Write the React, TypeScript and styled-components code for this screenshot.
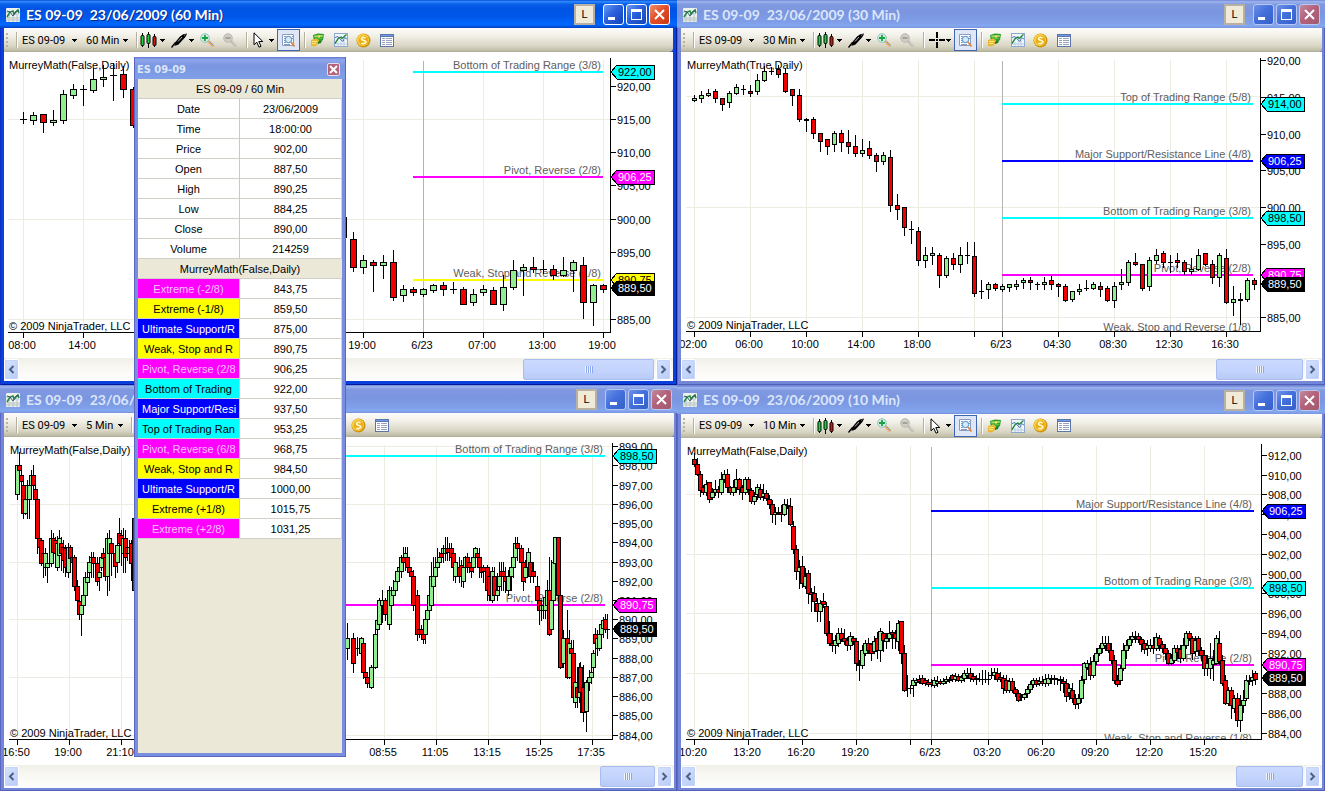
import React from 'react';
import styled, { createGlobalStyle, css } from 'styled-components';

const Global = createGlobalStyle`
  * { box-sizing: border-box; }
  html, body, #root { height: 100%; margin: 0; }
  body { overflow: hidden; background: #6f86d6; font: 11px/13px "Liberation Sans", Arial, sans-serif; color: #000; }
  button, select { font: inherit; color: inherit; margin: 0; padding: 0; border: 0; background: none; }
`;

/* ---------- desktop and window frames ---------- */

const Desktop = styled.div`
  position: relative;
  display: grid;
  grid-template-columns: minmax(0, 677fr) minmax(0, 648fr);
  height: 100vh;
  min-height: 700px;
`;

const Column = styled.div<{ $gap: number }>`
  display: grid;
  grid-template-rows: minmax(0, 385fr) minmax(0, 406fr);
  min-height: 0;
  row-gap: ${p => p.$gap}px;
`;

const Frame = styled.section<{ $active?: boolean; $edge: number }>`
  display: flex;
  flex-direction: column;
  min-width: 0;
  min-height: 0;
  padding: 0 ${p => (p.$active ? 4 : 3)}px ${p => p.$edge}px 4px;
  background: ${p => (p.$active ? '#0a3fdc' : '#7386d8')};
  box-shadow: inset 1px 0 ${p => (p.$active ? '#0831c8' : '#5a68c4')}, inset -1px -1px ${p => (p.$active ? '#001c9c' : '#5360b8')};
`;

const TitleBar = styled.header<{ $active?: boolean }>`
  display: flex;
  align-items: center;
  height: 28px;
  flex: none;
  margin: 0 ${p => (p.$active ? -4 : -3)}px 0 -4px;
  padding: 1px ${p => (p.$active ? 7 : 5)}px 0 6px;
  color: ${p => (p.$active ? '#fff' : '#dbe6fa')};
  background: ${p =>
    p.$active
      ? 'linear-gradient(#0a4ed6 0, #2f8bff 6%, #0a60ea 14%, #0054e3 30%, #0058ea 60%, #0068ff 88%, #0050d8 96%, #003cc0 100%)'
      : 'linear-gradient(#6f84d4 0, #9db4ee 6%, #8099e0 16%, #7b95e0 45%, #7f9fe8 80%, #84a8f0 92%, #7a93de 100%)'};
`;

const Title = styled.h2<{ $active?: boolean }>`
  flex: 1;
  margin: 0 0 0 6px;
  overflow: hidden;
  white-space: pre;
  font: bold 14px/20px Lato, "Open Sans", sans-serif;
  text-shadow: ${p => (p.$active ? '1px 1px #0a2a8c' : 'none')};
`;

const LinkButton = styled.button`
  width: 21px;
  height: 21px;
  margin-right: 6px;
  border: 2px solid #b9b0a4;
  background: #f0ead8;
  color: #000;
`;

const CaptionButton = styled.button<{ $active?: boolean; $close?: boolean }>`
  display: grid;
  place-items: center;
  width: 21px;
  height: 21px;
  margin-left: 2px;
  border: 1px solid ${p => (p.$active ? '#fff' : '#b9c8f2')};
  border-radius: 3px;
  background: ${p =>
    p.$close
      ? p.$active
        ? 'linear-gradient(135deg, #f09070, #e2502a 45%, #c83a14)'
        : 'linear-gradient(135deg, #c08a9c, #b4627a 45%, #a05a70)'
      : p.$active
        ? 'linear-gradient(135deg, #6a9cf4, #2a60dc 45%, #1444b8)'
        : 'linear-gradient(135deg, #6f92e8, #4470dc 45%, #3560c8)'};
`;

/* ---------- toolbar ---------- */

const Toolbar = styled.div`
  display: flex;
  align-items: center;
  flex: none;
  height: 24px;
  padding-left: 2px;
  overflow: hidden;
  background: linear-gradient(#fdfcfa, #f1efe6 35%, #d8d5c4 75%, #bcb9a4 96%, #a8a590);
  border-radius: 0 0 4px 0;
`;

const Grip = styled.span`
  width: 2px;
  height: 15px;
  margin-right: 8px;
  background: repeating-linear-gradient(#b8b4a4 0 2px, transparent 2px 4px);
`;

const Separator = styled.span`
  flex: none;
  width: 2px;
  height: 16px;
  background: linear-gradient(90deg, #b4b1a0 50%, #fff 50%);
`;

const Picker = styled.label<{ $width: number }>`
  position: relative;
  display: flex;
  align-items: center;
  flex: none;
  width: ${p => p.$width}px;
  margin-left: 4px;
  select {
    width: 100%;
    padding-top: 1px;
    appearance: none;
    font: 11px/16px Roboto, "Liberation Sans", sans-serif;
    outline: none;
  }
  svg { position: absolute; right: 4px; pointer-events: none; }
`;

const Tool = styled.button<{ $width?: number; $pressed?: boolean }>`
  display: flex;
  align-items: center;
  justify-content: center;
  gap: 1px;
  flex: none;
  width: ${p => p.$width ?? 23}px;
  height: 22px;
  ${p => p.$pressed && css`
    background: #dfe7f6;
    border: 1px solid #3f66b4;
  `}
`;

const Space = styled.span<{ $width: number }>`
  flex: none;
  width: ${p => p.$width}px;
`;

/* ---------- chart and scroll bar ---------- */

const ChartPane = styled.div`
  flex: 1;
  min-height: 0;
  overflow: hidden;
  background: #fff;
  svg { display: block; width: 100%; height: 100%; }
`;

const ScrollBar = styled.div`
  display: flex;
  flex: none;
  height: 23px;
  padding: 1px 2px 1px 0;
  background: linear-gradient(#f0efe8, #f8f7f2 40%, #fefefd);
`;

const ScrollButton = styled.button`
  display: grid;
  place-items: center;
  width: 15px;
  border: 1px solid #fff;
  border-radius: 2px;
  background: linear-gradient(135deg, #d6e2fd, #b8cbf8);
  box-shadow: inset 0 0 0 1px #c4d3fa;
`;

const Track = styled.div`
  display: flex;
  justify-content: flex-end;
  flex: 1;
`;

const Thumb = styled.div<{ $width: number }>`
  display: flex;
  align-items: center;
  justify-content: center;
  width: ${p => p.$width}px;
  margin-right: 2px;
  border: 1px solid #a9bdf0;
  border-radius: 2px;
  background: linear-gradient(#cbd9fd, #c2d3fc 60%, #b8cbf6);
  &::after {
    content: '';
    width: 8px;
    height: 7px;
    background: repeating-linear-gradient(90deg, #eef4fe 0 1px, #8ca8ec 1px 2px);
  }
`;

/* ---------- data box ---------- */

const DataBox = styled.aside`
  position: absolute;
  top: 57px;
  bottom: 34px;
  left: 134px;
  width: 212px;
  display: flex;
  flex-direction: column;
  padding: 0 4px 4px;
  background: #7a8ee0;
  box-shadow: inset 0 0 0 1px #5a66c0;
`;

const DataTitle = styled.header`
  display: flex;
  align-items: center;
  justify-content: space-between;
  flex: none;
  height: 22px;
  margin: 0 -3px;
  padding: 3px 5px 0 2px;
  color: #dbe6fa;
  background: linear-gradient(#6478d0, #8ea6ea 12%, #7b95e0 40%, #80a0e8);
  font: bold 11px/16px "DejaVu Sans Condensed", "Open Sans", sans-serif;
`;

const DataClose = styled.button`
  display: grid;
  place-items: center;
  width: 13px;
  height: 13px;
  border: 1px solid #e6dcec;
  border-radius: 2px;
  background: #b4627a;
`;

const DataBody = styled.div`
  flex: 1;
  min-height: 0;
  overflow: hidden;
  background: #ebe8d8;
`;

const DataTable = styled.table`
  width: 100%;
  table-layout: fixed;
  border-collapse: separate;
  border-spacing: 0;
`;

const Heading = styled.th`
  height: 20px;
  padding: 2px 0 0;
  font-weight: normal;
  background: #ebe8d8;
  border-bottom: 1px solid #d0cfc8;
`;

const Name = styled.th<{ $bg?: string; $fg?: string }>`
  height: 20px;
  padding: 2px 4px 0;
  overflow: hidden;
  white-space: nowrap;
  font-weight: normal;
  color: ${p => p.$fg ?? '#000'};
  background: ${p => p.$bg ?? '#fff'};
  border-right: 1px solid #c8c8c8;
  border-bottom: 1px solid #d0cfc8;
`;

const Value = styled.td`
  height: 20px;
  padding: 2px 0 0;
  text-align: center;
  background: #fff;
  border-right: 1px solid #d8d6cc;
  border-bottom: 1px solid #d0cfc8;
`;

/* ---------- icons ---------- */

const Caret = () => (
  <svg width="5" height="3" viewBox="0 0 5 3" shapeRendering="crispEdges"><path d="M0 0h5v1H0zM1 1h3v1H1zM2 2h1v1H2z" /></svg>
);

const WindowIcon = () => (
  <svg width="14" height="14" viewBox="0 0 14 14">
    <rect width="14" height="14" rx="1" fill="#eef2ee" />
    <path d="M0 10h14M0 12h14M3 7v7M7 7v7M11 7v7" stroke="#b8c4c4" />
    <path d="M0 4h4M8 6h5M1 7h3" stroke="#a8b8d8" />
    <path d="M1 9l3-5 3-1 1 3 4-4 1 3" fill="none" stroke="#1f8a3c" strokeWidth="1.500" />
    <path d="M1 3l3 1 3 4 3-5 3 0" fill="none" stroke="#345a6c" />
  </svg>
);

const CandlesIcon = () => (
  <svg width="17" height="16" viewBox="0 0 17 16">
    <path d="M2.500 1v14M8.500 0v16M14.500 2v13" stroke="#000" />
    <rect x="1" y="3.500" width="3" height="10" rx="1" fill="#22d040" stroke="#000" />
    <rect x="7" y="2.500" width="3" height="9" rx="1" fill="#22d040" stroke="#000" />
    <rect x="13" y="4.500" width="3" height="9" rx="1" fill="#c81c1c" stroke="#000" />
  </svg>
);

const PenIcon = () => (
  <svg width="17" height="15" viewBox="0 0 17 15">
    <path d="M0.500 14.500L4.500 9.500" stroke="#000" strokeWidth="1.300" />
    <path d="M4 9.500L9 3.500Q12 0.500 16 0.500Q15.500 3 13.500 5L7.500 11.500L3.500 13z" />
    <path d="M7 8.500l4-4.500" stroke="#c8ccd0" strokeWidth="0.900" />
    <path d="M13 2.500l1.500-1" stroke="#7a7e84" />
  </svg>
);

const ZoomIcon = ({ out }: { out?: boolean }) => (
  <svg width="15" height="15" viewBox="0 0 15 15">
    <path d="M8.500 8.500l4 4" stroke={out ? '#c0beb6' : '#e8b070'} strokeWidth="3" strokeLinecap="round" />
    <path d="M9.500 8.500l4 4" stroke={out ? '#dcdad2' : '#7a94c8'} />
    <circle cx="5" cy="5" r="4.300" fill={out ? '#cfcdc6' : '#d4f0e0'} stroke={out ? '#bab8b0' : '#8cc0c4'} />
    {out ? <path d="M2.500 5h5" stroke="#a4a29a" strokeWidth="2" /> : <path d="M2 5h6M5 2v6" stroke="#1ca044" strokeWidth="1.800" />}
  </svg>
);

const PointerIcon = () => (
  <svg width="11" height="16" viewBox="0 0 11 16">
    <path d="M1 0.800v12l2.800-2.600 2.200 5 2-0.900-2.200-4.800h4z" fill="#fff" stroke="#000" />
  </svg>
);

const CrossIcon = () => (
  <svg width="16" height="16" viewBox="0 0 16 16" shapeRendering="crispEdges">
    <path d="M7 0h2v6H7zM7 10h2v6H7zM0 7h6v2H0zM10 7h6v2h-6zM7 7h2v2H7z" />
  </svg>
);

const DataBoxIcon = () => (
  <svg width="15" height="15" viewBox="0 0 15 15">
    <path d="M1.500 1.500h11v11h-11z" fill="#fff" stroke="#8a9cc0" />
    <path d="M3 3.500h2M3 5.500h1M3 7.500h1M3 9.500h2M3 11.500h6M11 3.500h1M11 5.500h1" stroke="#8098c8" />
    <path d="M10 9l3.500 4.500" stroke="#e08a48" strokeWidth="2" />
    <circle cx="7.500" cy="6.500" r="3.200" fill="#d4ecfa" stroke="#4c88c0" />
  </svg>
);

const OrderIcon = () => (
  <svg width="15" height="14" viewBox="0 0 15 14">
    <path d="M3 2l5-1.500L14 1l-1 6-3 2H4z" fill="#2f9a30" />
    <path d="M4 2.500l9-0.500-0.500 2-8 0.500z" fill="#9ce05c" />
    <path d="M5 6l7-0.500" stroke="#68c848" />
    <path d="M1 7l5-1.500 3 1.500-1 4-3 2.500-4-0.500z" fill="#e8b830" />
    <path d="M2 8.500h5M2 10.500h4" stroke="#fbe88c" />
    <path d="M8 9l4-1.500-1 2.500-3 1z" fill="#1e7c24" />
    <circle cx="9" cy="3.500" r="1.200" fill="#f6e060" />
  </svg>
);

const IndicatorIcon = () => (
  <svg width="14" height="14" viewBox="0 0 14 14">
    <rect x="0.500" y="0.500" width="13" height="13" fill="#f2f7fc" stroke="#8ca8cc" />
    <path d="M4 9v4M7 8v5M10 7v6M1 11h12" stroke="#b8cce4" />
    <path d="M1 10.500L4.500 5l2.500-1 1 1.500L12.500 1.500" fill="none" stroke="#23873a" strokeWidth="1.400" />
    <path d="M1 4.500l3-1 3 3.500 2 1.500 1.500-4 2.500 1.500" fill="none" stroke="#4a78b0" />
  </svg>
);

const CoinIcon = () => (
  <svg width="15" height="15" viewBox="0 0 15 15">
    <circle cx="7.500" cy="7.500" r="7" fill="#d0940c" />
    <circle cx="7" cy="7" r="6" fill="#fbd84c" />
    <circle cx="7.500" cy="7.500" r="5" fill="#ecae18" />
    <path d="M9.500 5Q7 3.500 5.800 5T8 7.500T9 10T5.300 10" fill="none" stroke="#fff8d0" strokeWidth="1.600" />
  </svg>
);

const ListIcon = () => (
  <svg width="14" height="13" viewBox="0 0 14 13" shapeRendering="crispEdges">
    <path d="M0 0h14v13H0z" fill="#5c74a8" />
    <path d="M1 3h12v9H1z" fill="#fff" />
    <path d="M1 1h12v1H1z" fill="#6c9cf0" />
    <path d="M2 4h3v1H2zM6 4h6v1H6zM2 6h3v1H2zM6 6h6v1H6zM2 8h3v1H2zM6 8h6v1H6zM2 10h3v1H2zM6 10h6v1H6z" fill="#98a2b8" />
  </svg>
);

const Chevron = ({ right }: { right?: boolean }) => (
  <svg width="7" height="9" viewBox="0 0 7 9">
    <path d={right ? 'M1.500 1L5 4.500 1.500 8' : 'M5.500 1L2 4.500 5.500 8'} fill="none" stroke="#4d6185" strokeWidth="2" />
  </svg>
);

/* ---------- chart data ---------- */

type Candle = { x: number; high: number; top: number; bottom: number; low: number; up: boolean };
type Level = { y: number; color: string; text: string };
type Tag = { y: number; color: string; text: string; fg: string };
type ChartSpec = {
  id: string;
  left: number;
  top: number;
  study: string;
  plotLeft: number;
  axisX: number;
  axisTop: number;
  axisY: number;
  body: number;
  gridX: number[];
  gridY: number[];
  session?: number;
  times: [number, string][];
  prices: [number, string][];
  levelStart: number;
  levels: Level[];
  tags: Tag[];
  candles: Candle[];
};

// "g" is a rising bar, "r" a falling one: high, body top, body bottom, low.
const bars = (first: number, step: number, data: string): Candle[] =>
  data.trim().split(/\s+/).map((item, i) => {
    const at = item.indexOf('@');
    const x = at > 0 ? Number(item.slice(0, at)) : first + i * step;
    const bar = item.slice(at + 1);
    const [high, top, bottom, low] = bar.slice(1).split(',').map(Number);
    return { x, high, top, bottom, low, up: bar[0] === 'g' };
  });

const CYAN = '#00ffff';
const MAGENTA = '#ff00ff';
const BLUE = '#0000ff';
const YELLOW = '#ffff00';

const tag = (y: number, text: string, color: string): Tag => ({
  y, text, color, fg: color === CYAN || color === YELLOW ? '#000' : '#fff',
});

const hour60: ChartSpec = {
  id: 'm60', left: 4, top: 52, study: 'MurreyMath(False,Daily)',
  plotLeft: 8, axisX: 610, axisTop: 58, axisY: 332, body: 7,
  gridX: [23, 83, 363, 483, 543, 603], gridY: [119, 219, 319], session: 423,
  times: [[23, '08:00'], [83, '14:00'], [363, '19:00'], [423, '6/23'], [483, '07:00'], [543, '13:00'], [603, '19:00']],
  prices: [[86, '920,00'], [119, '915,00'], [152, '910,00'], [185, '905,00'], [219, '900,00'], [252, '895,00'], [319, '885,00']],
  levelStart: 413,
  levels: [
    { y: 72, color: CYAN, text: 'Bottom of Trading Range (3/8)' },
    { y: 177, color: MAGENTA, text: 'Pivot, Reverse (2/8)' },
    { y: 280, color: YELLOW, text: 'Weak, Stop and Reverse (1/8)' },
  ],
  tags: [tag(72, '922,00', CYAN), tag(177, '906,25', MAGENTA), tag(280, '890,75', YELLOW), tag(288, '889,50', '#000')],
  candles: [
    ...bars(23, 10, `g112,119,119,123 g112,115,120,124 r114,114,122,132 g110,120,122,125 g90,94,120,123 g84,89,95,98
      g85,89,89,105 g68,79,90,92 g65,77,79,86 g63,75,75,100 r66,74,89,97 r87,89,125,127`),
    ...bars(343, 10, `r210,217,237,240 r232,239,267,271 g255,260,267,273 r260,262,265,291 g255,262,265,278 r250,262,297,300
      g285,289,295,301 r287,289,292,295 g288,289,294,296 g284,285,290,292 r282,285,289,295 g282,289,289,293 r287,289,304,304
      g289,294,302,305 g285,289,292,295 r287,290,304,304 g275,287,304,310 g260,270,287,289 g264,267,270,295 r257,267,269,272
      g260,269,269,273 r265,269,275,279 g257,270,275,276 g260,262,270,291 r257,265,302,318 g284,285,302,325 r284,285,289,292`),
  ],
};

const min30: ChartSpec = {
  id: 'm30', left: 681, top: 52, study: 'MurreyMath(True,Daily)',
  plotLeft: 686, axisX: 1260, axisTop: 58, axisY: 331, body: 5,
  gridX: [694, 750, 806, 862, 918, 974, 1058, 1114, 1170, 1226], gridY: [96, 207, 317], session: 1002,
  times: [[694, '02:00'], [750, '06:00'], [806, '10:00'], [862, '14:00'], [918, '18:00'], [974, ''], [1002, '6/23'],
    [1058, '04:30'], [1114, '08:30'], [1170, '12:30'], [1226, '16:30']],
  prices: [[60, '920,00'], [97, '915,00'], [134, '910,00'], [170, '905,00'], [207, '900,00'], [244, '895,00'], [317, '885,00']],
  levelStart: 1002,
  levels: [
    { y: 104, color: CYAN, text: 'Top of Trading Range (5/8)' },
    { y: 161, color: BLUE, text: 'Major Support/Resistance Line (4/8)' },
    { y: 218, color: CYAN, text: 'Bottom of Trading Range (3/8)' },
    { y: 275, color: MAGENTA, text: 'Pivot, Reverse (2/8)' },
    { y: 334, color: YELLOW, text: 'Weak, Stop and Reverse (1/8)' },
  ],
  tags: [tag(104, '914,00', CYAN), tag(161, '906,25', BLUE), tag(218, '898,50', CYAN), tag(275, '890,75', MAGENTA), tag(284, '889,50', '#000')],
  candles: bars(694, 7, `g95,98,100,101 g91,95,98,102 g89,93,95,96 r89,91,98,102 r98,98,104,110 g91,93,102,107 g84,87,93,94
    g85,89,89,94 r85,91,93,96 g74,80,91,94 g66,71,80,81 g67,71,71,74 r65,69,74,77 r68,73,91,92 r89,89,95,105 r89,95,119,121
    g118,119,120,131 r117,119,133,138 r133,133,141,151 r139,139,146,154 g131,133,144,151 r130,133,142,151 r130,142,146,153
    r135,146,153,156 g139,150,153,156 r141,148,155,158 r153,155,161,171 g152,155,161,164 r150,157,205,211 r194,205,209,219
    r207,207,227,235 g221,229,229,243 r227,231,260,265 g247,255,260,267 g247,253,255,264 r253,255,275,287 g256,258,275,277
    r253,258,264,269 g247,255,264,272 g242,255,255,263 r242,256,293,296 g280,291,291,298 g282,284,289,298 r283,284,288,290
    g284,286,289,291 g284,284,287,291 g280,284,286,289 g278,280,282,288 r277,280,282,289 g282,284,284,289 g277,282,284,289
    r276,280,284,289 r283,284,286,296 r284,286,300,301 g291,291,299,301 g284,289,291,294 g280,288,288,290 g282,284,288,289
    r282,286,289,296 r286,288,300,301 g282,286,300,307 g269,282,284,289 g260,262,282,285 r253,262,264,265 r264,264,288,290
    g257,260,286,290 g249,255,260,263 r251,253,262,267 g255,262,262,272 r253,260,262,267 r260,262,271,274 g258,269,271,274
    g249,255,269,270 r253,253,264,265 r260,264,277,283 g253,255,277,286 r249,258,302,303 g286,299,302,315 g293,299,300,324
    g278,280,299,301 r278,280,284,289`),
};

const min5: ChartSpec = {
  id: 'm5', left: 4, top: 437, study: 'MurreyMath(False,Daily)',
  plotLeft: 9, axisX: 612, axisTop: 443, axisY: 739, body: 5,
  gridX: [17, 69, 121, 384, 436, 488, 540, 592], gridY: [446, 504, 562, 619, 677, 735],
  times: [[17, '16:50'], [69, '19:00'], [121, '21:10'], [384, '08:55'], [436, '11:05'], [488, '13:15'], [540, '15:25'], [592, '17:35']],
  prices: [[446, '899,00'], [465, '898,00'], [485, '897,00'], [504, '896,00'], [523, '895,00'], [542, '894,00'], [562, '893,00'],
    [581, '892,00'], [600, '891,00'], [619, '890,00'], [638, '889,00'], [658, '888,00'], [677, '887,00'], [696, '886,00'],
    [715, '885,00'], [735, '884,00']],
  levelStart: 240,
  levels: [
    { y: 456, color: CYAN, text: 'Bottom of Trading Range (3/8)' },
    { y: 605, color: MAGENTA, text: 'Pivot, Reverse (2/8)' },
  ],
  tags: [tag(456, '898,50', CYAN), tag(605, '890,75', MAGENTA), tag(629, '889,50', '#000')],
  candles: bars(0, 0, `17@g465,465,494,499 19@r452,465,470,477 21@r470,475,481,490 23@r481,485,513,518 25@g485,499,513,514
    27@g480,485,499,518 29@g475,485,499,518 31@g470,475,485,490 33@r465,475,485,497 35@r485,489,499,505 37@r495,499,538,553
    39@r530,538,547,555 41@r538,540,563,565 43@r550,553,563,577 45@g548,553,567,575 47@g555,563,567,582 51@g530,538,563,566
    53@r533,538,552,560 55@r537,540,553,562 57@g536,543,567,570 59@g530,538,555,560 61@r537,543,553,570 63@r540,547,560,572
    65@r545,548,567,576 68@g543,547,572,577 70@r545,547,558,562 72@r550,557,562,572 74@r555,557,586,590 77@r580,586,600,605
    79@r598,601,614,619 81@g600,605,614,635 83@g590,595,605,608 85@g572,577,595,600 87@g566,577,582,585 89@g556,562,572,576
    91@g552,557,562,577 93@r552,557,563,577 97@r557,563,581,585 99@g565,572,577,590 101@g553,557,567,570 103@r548,553,558,560
    105@r552,557,576,580 107@g533,538,576,595 109@g530,538,553,590 111@r540,543,553,575 115@r548,553,566,577
    117@g540,545,562,572 119@r518,533,543,560 121@r530,535,545,565 123@g528,538,553,572 125@r530,538,557,572
    127@r540,547,553,560 129@g540,547,553,562 131@r540,543,563,580 134@r500,518,590,592
    347@g623,638,648,659 353@r633,638,663,672 357@g637,648,648,655 361@g637,638,653,655 363@r640,643,672,678
    365@r670,672,677,680 367@r675,677,683,687 371@g665,667,687,688 375@g625,634,667,668 377@g617,620,629,635
    379@g598,600,624,628 382@g590,600,605,622 385@r598,600,614,620 389@g586,590,624,629 391@g587,590,605,615
    393@g580,590,595,600 395@g572,581,590,595 397@g568,571,581,590 399@g560,567,571,577 401@g555,557,571,577
    403@r547,557,562,566 405@g547,553,557,570 407@r547,557,567,570 409@r560,567,572,575 411@r567,571,576,590
    413@r570,576,605,610 417@r590,595,634,640 419@r622,629,634,637 421@r625,629,634,637 423@r630,634,639,643
    425@g615,619,634,643 427@g606,610,619,625 429@g590,595,610,615 431@g562,576,605,610 433@g557,576,586,595
    435@g557,567,576,586 437@g548,562,567,572 439@g552,557,562,566 441@r548,553,557,562 443@g545,548,553,562
    445@g537,548,553,560 447@r537,548,552,560 449@r543,548,552,560 451@r543,548,557,566 453@r550,553,567,580
    455@g553,562,576,582 459@r557,567,576,582 461@r560,565,576,586 463@g560,567,581,587 465@g556,557,567,577
    467@r553,557,567,572 469@r557,562,567,572 471@r557,567,571,577 473@g550,557,567,572 475@g547,548,557,562
    477@r548,553,557,567 479@r548,557,567,577 481@r560,567,572,577 483@r565,567,571,582 487@r565,567,590,600
    489@r572,576,595,600 492@g567,571,600,602 494@r567,576,595,600 497@g573,590,595,600 499@g562,576,586,595
    501@r562,571,576,590 503@r562,571,576,590 505@r567,576,581,592 508@g570,576,590,595 511@g560,567,576,590
    513@g550,557,567,577 515@g537,543,557,562 517@r537,543,548,560 521@r545,548,562,567 523@r555,562,581,590
    525@g560,567,577,582 528@g548,552,567,572 530@r552,562,576,582 533@r562,571,576,582 537@r576,586,600,610
    539@r595,600,610,624 541@g600,605,610,620 543@g600,605,610,618 545@g590,597,610,618 547@g580,590,605,634
    549@r557,590,634,635 551@g560,600,629,632 553@g557,562,600,605 555@g537,537,563,600 558@r537,537,595,625
    560@r595,595,667,668 563@g630,638,663,667 567@r610,638,677,678 569@g630,643,677,678 571@r640,648,653,667
    573@r640,653,697,698 575@g675,682,702,707 577@r680,687,697,707 579@g663,667,697,702 580@r662,667,692,712
    583@r665,687,712,721 586@g680,682,711,731 589@g670,677,682,690 591@g667,672,677,683 593@g650,653,667,677
    595@r628,634,643,655 597@g630,638,648,655 599@g625,634,648,650 601@g620,624,634,648 603@g617,620,628,637
    605@r614,619,629,632 607@g614,629,629,638`),
};

const min10: ChartSpec = {
  id: 'm10', left: 681, top: 438, study: 'MurreyMath(False,Daily)',
  plotLeft: 686, axisX: 1261, axisTop: 444, axisY: 739, body: 5,
  gridX: [694, 748, 802, 856, 910, 988, 1042, 1096, 1150, 1204], gridY: [494, 554, 613, 673, 733], session: 931,
  times: [[694, '10:20'], [748, '13:20'], [802, '16:20'], [856, '19:20'], [910, ''], [931, '6/23'], [988, '03:20'],
    [1042, '06:20'], [1096, '09:20'], [1150, '12:20'], [1204, '15:20']],
  prices: [[455, '912,00'], [475, '910,00'], [494, '908,00'], [514, '906,00'], [534, '904,00'], [554, '902,00'], [574, '900,00'],
    [593, '898,00'], [613, '896,00'], [633, '894,00'], [653, '892,00'], [693, '888,00'], [713, '886,00'], [733, '884,00']],
  levelStart: 931,
  levels: [
    { y: 511, color: BLUE, text: 'Major Support/Resistance Line (4/8)' },
    { y: 588, color: CYAN, text: 'Bottom of Trading Range (3/8)' },
    { y: 665, color: MAGENTA, text: 'Pivot, Reverse (2/8)' },
    { y: 745, color: YELLOW, text: 'Weak, Stop and Reverse (1/8)' },
  ],
  tags: [tag(511, '906,25', BLUE), tag(588, '898,50', CYAN), tag(665, '890,75', MAGENTA), tag(678, '889,50', '#000')],
  candles: bars(694, 3, `r453,459,464,466 r458,464,474,475 r471,474,490,496 r485,487,492,494 g480,484,492,495 r482,482,499,502
    g488,492,497,499 g480,489,492,495 r486,489,492,497 g472,479,492,494 g470,474,479,482 r469,474,487,492 r486,487,492,494
    g480,487,492,495 g469,479,487,492 r478,479,489,494 r485,487,492,499 g477,479,492,494 r477,479,489,494 r488,490,501,503
    g492,496,501,504 g484,487,494,499 r484,489,497,499 g484,493,496,500 r490,493,498,500 r495,499,504,508 r500,504,514,522
    g507,512,514,524 g507,513,513,514 r505,512,514,521 g499,504,514,515 g499,505,505,508 r498,506,524,525 r521,526,549,553
    r545,549,571,579 g560,567,571,588 r556,566,583,587 g568,576,586,588 r570,573,593,603 r588,592,594,611 r586,593,601,611
    r598,603,611,621 g600,603,611,621 r593,601,604,607 r602,606,633,635 r621,633,643,645 r633,643,645,651 g635,640,645,653
    g628,633,643,646 r628,633,639,641 r629,638,641,644 r637,640,645,650 g632,636,645,649 r636,638,641,644 r638,641,663,670
    r660,664,665,680 g645,650,665,668 g640,643,653,655 r638,643,650,653 r643,644,653,660 g636,641,651,653 r632,638,650,658
    g628,631,650,661 r632,633,640,651 g633,638,641,648 g621,633,638,641 r630,632,634,648 r630,633,638,648 g620,623,641,650
    r621,621,653,663 r645,653,690,691 g675,688,688,696 g685,688,688,693 g678,680,685,696 g678,680,682,685 r675,679,681,683
    r675,678,683,684 r678,680,683,685 r679,682,684,686 r679,682,684,686 g677,680,685,687 g676,681,683,686 r679,681,683,684
    g678,681,683,684 g676,679,681,683 g677,679,680,682 r674,675,679,681 g673,676,679,681 r674,676,680,681 g675,677,680,682
    g670,673,678,681 g668,673,675,678 r668,673,678,681 r673,676,679,681 r675,678,679,684 g673,679,679,681 g670,679,679,684
    g670,679,679,682 g672,679,679,684 g668,675,675,678 g668,672,675,679 r668,673,679,681 r672,677,679,681 r675,678,688,693
    r675,680,690,692 g678,681,690,692 r678,681,690,692 r687,689,693,696 r690,693,700,701 g694,696,697,700 g693,694,697,699
    g686,689,693,697 g681,684,689,692 g678,680,684,687 r678,680,684,686 g677,681,683,685 r676,681,683,685 g674,679,683,686
    g674,678,683,685 g675,678,679,683 g675,678,678,684 g678,679,679,684 g676,679,680,690 r677,681,683,692 r679,683,696,701
    g684,688,692,699 r683,690,698,702 r694,698,704,708 g694,698,703,708 g676,680,698,702 g662,663,679,683 g660,663,667,669
    r657,664,675,679 g655,661,675,677 g648,653,661,664 g645,648,653,655 g636,643,648,652 g636,643,645,650 r636,643,650,652
    r643,650,660,663 r655,660,680,683 r675,680,684,686 g665,668,680,684 g643,650,668,670 g640,645,650,658 g636,639,645,648
    g632,636,639,642 g631,637,637,642 r633,636,639,642 r637,639,644,651 r640,643,649,653 g640,645,648,655 g639,645,648,651
    r637,645,648,653 g633,637,648,650 r635,638,645,650 r641,644,648,652 r644,648,653,659 r650,653,663,664 g654,658,663,664
    g645,648,660,662 r645,648,652,658 r645,649,658,662 g638,645,658,660 g631,633,645,648 r631,633,638,640 r636,638,653,659
    g636,640,651,655 r636,638,650,655 r647,650,655,660 r650,655,668,675 g655,663,668,675 g643,658,668,678 g650,660,664,680
    g635,638,663,664 r631,643,661,664 r655,660,683,685 r675,680,703,704 g687,690,703,705 r687,690,705,718 g695,698,708,712
    r693,698,720,726 g695,705,720,731 g690,700,705,712 g675,680,698,700 g675,680,681,684 g670,677,680,685 r671,673,679,684`),
};

/* ---------- chart ---------- */

const CandleMark = ({ c, width }: { c: Candle; width: number }) => {
  const left = c.x - (width - 1) / 2;
  const height = c.bottom - c.top + 1;
  return (
    <g>
      <rect x={c.x} y={c.high} width={1} height={c.low - c.high + 1} />
      <rect x={left} y={c.top} width={width} height={height} />
      {height > 2 && (
        <rect x={left + 1} y={c.top + 1} width={width - 2} height={height - 2} fill={c.up ? '#90ee90' : '#f00000'} />
      )}
    </g>
  );
};

const Chart = ({ spec: s }: { spec: ChartSpec }) => (
  <ChartPane>
    <svg role="img" aria-label={s.study} fontFamily='"Liberation Sans", Arial, sans-serif' fontSize="11">
      <clipPath id={s.id}>
        <rect x={s.plotLeft} y={s.axisTop} width={s.axisX - s.plotLeft} height={s.axisY - s.axisTop} />
      </clipPath>
      <g transform={`translate(${-s.left} ${-s.top})`} shapeRendering="crispEdges">
        <g fill="#eeece2">
          {s.gridX.map(x => <rect key={x} x={x} y={s.axisTop + 2} width={1} height={s.axisY - s.axisTop - 2} />)}
          {s.gridY.map(y => <rect key={y} x={s.plotLeft} y={y} width={s.axisX - s.plotLeft} height={1} />)}
        </g>
        {s.session && <rect x={s.session} y={s.axisTop + 3} width={1} height={s.axisY - s.axisTop - 3} fill="#b4b4b4" />}
        <g clipPath={`url(#${s.id})`}>
          {s.levels.map(l => (
            <g key={l.text}>
              <rect x={s.levelStart} y={l.y - 1} width={s.axisX - 7 - s.levelStart} height={2} fill={l.color} />
              <text x={s.axisX - 9} y={l.y - 3} textAnchor="end" fill="#606060">{l.text}</text>
            </g>
          ))}
        </g>
        <text x={s.plotLeft + 1} y={s.axisTop + 11}>{s.study}</text>
        <text x={s.plotLeft + 1} y={s.axisY - 2}>© 2009 NinjaTrader, LLC</text>
        {s.candles.map(c => <CandleMark key={c.x} c={c} width={s.body} />)}
        <rect x={s.axisX} y={s.axisTop} width={1} height={s.axisY - s.axisTop + 1} />
        <rect x={s.plotLeft} y={s.axisY} width={s.axisX - s.plotLeft} height={1} />
        {s.times.map(([x, text]) => (
          <g key={x}>
            <rect x={x} y={s.axisY} width={1} height={6} />
            <text x={x - 1} y={s.axisY + 17} textAnchor="middle">{text}</text>
          </g>
        ))}
        {s.prices.map(([y, text]) => (
          <g key={y}>
            <rect x={s.axisX + 1} y={y} width={5} height={1} />
            <text x={s.axisX + 7} y={y + 5}>{text}</text>
          </g>
        ))}
        {s.tags.map(t => (
          <g key={t.y}>
            <path d={`M${s.axisX + 1} ${t.y}l6 -7h37v14h-37z`} fill={t.color} stroke="#000" />
            <text x={s.axisX + 8} y={t.y + 4} fill={t.fg}>{t.text}</text>
          </g>
        ))}
      </g>
    </svg>
  </ChartPane>
);

/* ---------- window ---------- */

type WindowProps = {
  interval: string;
  intervalWidth?: number;
  active?: boolean;
  cross?: boolean;
  edge?: number;
  thumb: number;
  spec: ChartSpec;
};

const ChartWindow = ({ interval, intervalWidth = 46, active, cross, edge = 4, thumb, spec }: WindowProps) => (
  <Frame $active={active} $edge={edge}>
    <TitleBar $active={active}>
      <WindowIcon />
      <Title $active={active}>{`ES 09-09  23/06/2009 (${interval})`}</Title>
      <LinkButton aria-label="Link window">L</LinkButton>
      <CaptionButton $active={active} aria-label="Minimize">
        <svg width="13" height="13" viewBox="0 0 13 13"><path d="M1 9h7v3H1z" fill="#fff" /></svg>
      </CaptionButton>
      <CaptionButton $active={active} aria-label="Maximize">
        <svg width="13" height="13" viewBox="0 0 13 13"><path d="M1 1h11v11H1zM2 4v7h9V4z" fillRule="evenodd" fill="#fff" /></svg>
      </CaptionButton>
      <CaptionButton $active={active} $close aria-label="Close">
        <svg width="13" height="13" viewBox="0 0 13 13"><path d="M2 2l9 9M11 2l-9 9" stroke="#fff" strokeWidth="2" /></svg>
      </CaptionButton>
    </TitleBar>
    <Toolbar>
      <Grip />
      <Separator />
      <Picker $width={59}>
        <select aria-label="Instrument"><option>ES 09-09</option></select>
        <Caret />
      </Picker>
      <Space $width={1} />
      <Picker $width={intervalWidth}>
        <select aria-label="Interval"><option>{interval}</option></select>
        <Caret />
      </Picker>
      <Space $width={4} />
      <Separator />
      <Tool $width={28} aria-label="Chart style"><CandlesIcon /><Space $width={1} /><Caret /></Tool>
      <Space $width={2} />
      <Tool $width={28} aria-label="Draw"><PenIcon /><Caret /></Tool>
      <Tool aria-label="Zoom in"><ZoomIcon /></Tool>
      <Tool aria-label="Zoom out" disabled><ZoomIcon out /></Tool>
      <Space $width={4} />
      <Separator />
      <Space $width={1} />
      <Tool $width={28} aria-label="Cursor">{cross ? <CrossIcon /> : <><PointerIcon /><Space $width={3} /></>}<Caret /></Tool>
      <Tool $pressed aria-label="Data box"><DataBoxIcon /></Tool>
      <Space $width={4} />
      <Separator />
      <Tool aria-label="Orders"><OrderIcon /></Tool>
      <Tool aria-label="Indicators"><IndicatorIcon /></Tool>
      <Tool aria-label="Strategies"><CoinIcon /></Tool>
      <Tool aria-label="Properties"><ListIcon /></Tool>
    </Toolbar>
    <Chart spec={spec} />
    <ScrollBar>
      <ScrollButton aria-label="Scroll left"><Chevron /></ScrollButton>
      <Track><Thumb $width={thumb} /></Track>
      <ScrollButton aria-label="Scroll right"><Chevron right /></ScrollButton>
    </ScrollBar>
  </Frame>
);

const quote: [string, string][] = [
  ['Date', '23/06/2009'], ['Time', '18:00:00'], ['Price', '902,00'], ['Open', '887,50'],
  ['High', '890,25'], ['Low', '884,25'], ['Close', '890,00'], ['Volume', '214259'],
];

const PINK = '#ffc4ff';

const murrey: [string, string, string, string][] = [
  ['Extreme (-2/8)', '843,75', MAGENTA, PINK],
  ['Extreme (-1/8)', '859,50', YELLOW, '#000'],
  ['Ultimate Support/R', '875,00', BLUE, '#fff'],
  ['Weak, Stop and R', '890,75', YELLOW, '#000'],
  ['Pivot, Reverse (2/8', '906,25', MAGENTA, PINK],
  ['Bottom of Trading', '922,00', CYAN, '#000'],
  ['Major Support/Resi', '937,50', BLUE, '#fff'],
  ['Top of Trading Ran', '953,25', CYAN, '#000'],
  ['Pivot, Reverse (6/8', '968,75', MAGENTA, PINK],
  ['Weak, Stop and R', '984,50', YELLOW, '#000'],
  ['Ultimate Support/R', '1000,00', BLUE, '#fff'],
  ['Extreme (+1/8)', '1015,75', YELLOW, '#000'],
  ['Extreme (+2/8)', '1031,25', MAGENTA, PINK],
];

export default function App() {
  return (
    <>
      <Global />
      <Desktop>
        <Column $gap={0}>
          <ChartWindow interval="60 Min" active thumb={131} spec={hour60} />
          <ChartWindow interval="5 Min" intervalWidth={41} edge={3} thumb={55} spec={min5} />
        </Column>
        <Column $gap={1}>
          <ChartWindow interval="30 Min" cross thumb={87} spec={min30} />
          <ChartWindow interval="10 Min" edge={3} thumb={67} spec={min10} />
        </Column>
        <DataBox>
          <DataTitle>
            ES 09-09
            <DataClose aria-label="Close data box">
              <svg width="9" height="9" viewBox="0 0 9 9"><path d="M1 1l7 7M8 1l-7 7" stroke="#fff" strokeWidth="2" /></svg>
            </DataClose>
          </DataTitle>
          <DataBody>
            <DataTable>
              <tbody>
                <tr><Heading colSpan={2}>ES 09-09 / 60 Min</Heading></tr>
                {quote.map(([name, value]) => (
                  <tr key={name}><Name scope="row">{name}</Name><Value>{value}</Value></tr>
                ))}
                <tr><Heading colSpan={2}>MurreyMath(False,Daily)</Heading></tr>
                {murrey.map(([name, value, bg, fg]) => (
                  <tr key={value}><Name scope="row" $bg={bg} $fg={fg}>{name}</Name><Value>{value}</Value></tr>
                ))}
              </tbody>
            </DataTable>
          </DataBody>
        </DataBox>
      </Desktop>
    </>
  );
}
